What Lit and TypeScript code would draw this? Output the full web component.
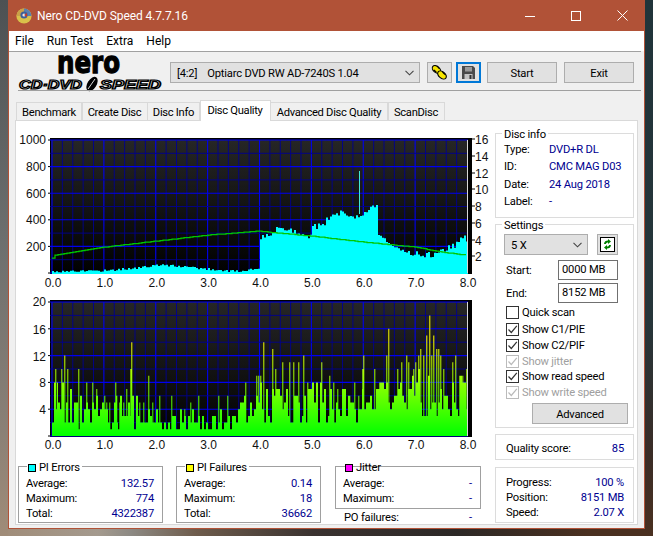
import { LitElement, html, svg, css } from "lit";
import { customElement } from "lit/decorators.js";

function rng(seed: number) {
  return () => {
    seed |= 0; seed = (seed + 0x6d2b79f5) | 0;
    let t = Math.imul(seed ^ (seed >>> 15), 1 | seed);
    t = (t + Math.imul(t ^ (t >>> 7), 61 | t)) ^ t;
    return ((t ^ (t >>> 14)) >>> 0) / 4294967296;
  };
}
const X0 = 52, XU = 51.875;
const px = (g: number) => X0 + g * XU;
function lerp(points: number[][], g: number) {
  for (let i = 1; i < points.length; i++) {
    if (g <= points[i][0]) {
      const [a, b] = points[i - 1], [c, d] = points[i];
      return b + ((d - b) * (g - a)) / (c - a || 1);
    }
  }
  return points[points.length - 1][1];
}
const CYAN = [[0,2.5],[0.5,3],[1,3.5],[1.4,5],[1.8,7],[2,9],[2.4,8],[2.8,6],[3,5],[3.3,3.5],[3.6,2.5],[3.8,4.5],[3.98,5],[3.99,36],[4.2,38],[4.35,47],[4.5,46],[4.75,42],[4.9,37],[4.95,38],[5,47],[5.2,49],[5.35,58],[5.5,61],[5.8,58],[6,61],[6.15,66],[6.27,67],[6.28,40],[6.4,35],[6.47,31],[6.6,27],[6.75,26],[6.82,21],[7,20],[7.3,19],[7.45,22],[7.6,26],[7.75,28],[7.85,34],[7.95,37],[8,32]];
const GREEN = [[0,258],[0.03,255],[1,247],[2,241],[3,235],[3.95,231],[5,236],[6,242],[7,247],[7.5,252],[7.97,255]];
const PEAKS: number[][] = [
  [55,8],[57,8],[55.3,10],[61.3,10],[64.3,12],[67.3,10],[78.3,10],[86.3,8],[92.3,8],[96.3,7],[104.3,6],[106.3,5],[109.3,5],[115.3,8],[116.3,6],[119.3,5],[123.3,5],[126.3,7],[130.3,10],[131.3,14],[132.3,5],[139.3,5],[143.3,5],[148.3,9],[152.3,5],[156.3,4],[159.3,6],[171.3,6],[184.3,4],[190.3,5],[198.3,6],[218.3,6],[227.3,6],[240.3,4],[245.3,8],[256.3,9],[258.3,9],
  [260.3,9],[263.3,14],[272.3,13],[275.3,10],[282.3,11],[289.3,11],[293.3,11],[298.3,11],[303.3,12],[307.3,8],[312.3,8],[321.3,11],[329.3,9],[333.3,8],[337.3,7],[343.3,6],[349.3,6],[354.3,8],[358.3,6],[362.3,10],[363.3,12],[374.3,10],[379.3,8],[386.3,12],[388.3,16],[397.3,10],[401.3,11],[406.3,12],[408.3,11],[413.3,10],[415.3,11],[418.3,12],[420.3,13],[423.3,12],[426.3,15],[429.3,18],[431.3,12],[433.3,15],[436.3,13],[438.3,13],[440.3,12],[443.3,10],[452.3,11],[455.3,12],[459.3,9],[462.3,9],[466.3,10],
];
function cyanPath() {
  const r = rng(17);
  let d = "M52 274";
  for (let x = 52; x < 467; x += 2) {
    const g = (x - X0) / XU;
    const h = lerp(CYAN, g);
    const steady = (g > 6.28 && g < 6.7) ? 0.3 : 1;
    const noise = (r() - 0.5) * (h > 15 ? 6 : 2.5) * steady;
    const top = Math.max(0.5, h + noise);
    d += `V${(274 - top).toFixed(1)}H${x + 2}`;
  }
  return d + "V274Z";
}
function greenPath() {
  let d = "";
  for (let x = 52; x <= 465; x += 3) {
    const y = Math.round(lerp(GREEN, (x - X0) / XU) * 2) / 2;
    d += (d ? `H${x}V${y}` : `M${x} ${y}`);
  }
  return d + "H466";
}
function barsPath() {
  const r = rng(91);
  const U = 6.7;
  let d = "";
  for (let x = 52; x < 467; x += 2) {
    const g = (x - X0) / XU;
    let lo = 1, hi = 3, floor = 1;
    if (g < 0.5) { lo = 2; hi = 8; floor = 1; }
    else if (g < 2) { lo = 1; hi = 6; floor = 1; }
    else if (g < 3.6) { lo = 0.6; hi = 4; floor = 0; }
    else if (g < 4) { lo = 1; hi = 6; floor = 1; }
    else if (g < 6.7) { lo = 2; hi = 8; floor = 2; }
    else { lo = 3; hi = 10; floor = 3; }
    let v = Math.round(lo + r() * (hi - lo));
    if (r() < 0.1) v = Math.max(floor, Math.min(v, 2));
    if (v > 0) d += `M${x} 436V${(436 - v * U).toFixed(1)}H${x + 2}V436Z`;
  }
  for (const [x, v] of PEAKS) d += `M${x} 436V${(436 - v * U).toFixed(1)}H${x + 1}V436Z`;
  return d;
}

interface AxisSpec { top: number; bottom: number; minor: number; }

function grid(a: AxisSpec) {
  const ys: number[] = [];
  const step = (a.bottom - a.top) / a.minor;
  for (let i = 0; i <= a.minor; i++) ys.push(a.top + step * i);
  const xs: number[] = [];
  for (let i = 0; i < 40; i++) xs.push(px(i * 0.2));
  return svg`
    ${xs.map((x, i) => svg`<line class=${i % 5 === 0 ? "major" : "minor"} x1=${x} x2=${x} y1=${a.top} y2=${a.bottom}></line>`)}
    ${ys.map((y, i) => svg`<line class=${i % 2 === 0 ? "major" : "minor"} x1="50" x2="468" y1=${y} y2=${y}></line>`)}
    ${ys.filter((_, i) => i % 2 === 0).map((y) => svg`<line class="tick" x1="48" x2="50" y1=${y} y2=${y}></line>`)}
    <line class="end" x1="467.5" x2="467.5" y1=${a.top} y2=${a.bottom}></line>
  `;
}

const XLABELS = ["0.0", "1.0", "2.0", "3.0", "4.0", "5.0", "6.0", "7.0", "8.0"];

function topChart() {
  const axis: AxisSpec = { top: 140, bottom: 273, minor: 10 };
  const left: [string, number][] = [["1000", 139], ["800", 166], ["600", 193], ["400", 219], ["200", 246]];
  const right: [string, number][] = [["16", 139], ["14", 156], ["12", 173], ["10", 189], ["8", 206], ["6", 223], ["4", 240], ["2", 256]];
  return html`<svg class="chart" viewBox="16 130 477 162" width="477" height="162">
    <defs>
      <linearGradient id="bgTop" x1="0" y1="0" x2="0" y2="1"><stop offset="0" stop-color="#262626"></stop><stop offset="1" stop-color="#000"></stop></linearGradient>
    </defs>
    <rect x="50" y="138" width="422" height="136" fill="#000"></rect>
    <rect x="51" y="140" width="417" height="134" fill="url(#bgTop)"></rect>
    ${grid(axis)}
    <path d=${cyanPath()} fill="#00ffff"></path>
    <line x1="359.5" x2="359.5" y1="171" y2="214" stroke="#40e8d8" stroke-width="1"></line>
    <path d=${greenPath()} fill="none" stroke="#00c800" stroke-width="1.25"></path>
    <line class="end" x1="467.5" x2="467.5" y1="140" y2="273"></line>
    ${right.map(([, y]) => svg`<line class="tick" x1="472" x2="475" y1=${y} y2=${y}></line>`)}
    ${left.map(([t, y]) => svg`<text class="axis" x="46" y=${y + 4.5} text-anchor="end">${t}</text>`)}
    ${right.map(([t, y]) => svg`<text class="axis" x="475" y=${y + 4.5}>${t}</text>`)}
    ${XLABELS.map((t, i) => svg`<text class="axis" x=${px(i) + 1} y="287" text-anchor="middle">${t}</text>`)}
  </svg>`;
}
function bottomChart() {
  const axis: AxisSpec = { top: 302, bottom: 436, minor: 10 };
  const left: [string, number][] = [["20", 301], ["16", 329], ["12", 356], ["8", 382], ["4", 409]];
  return html`<svg class="chart" viewBox="16 292 477 162" width="477" height="162">
    <defs>
      <linearGradient id="bgBot" x1="0" y1="0" x2="0" y2="1"><stop offset="0" stop-color="#262626"></stop><stop offset="1" stop-color="#000"></stop></linearGradient>
      <linearGradient id="barG" gradientUnits="userSpaceOnUse" x1="0" y1="436" x2="0" y2="340">
        <stop offset="0" stop-color="#00ff00"></stop><stop offset="0.5" stop-color="#80ff00"></stop><stop offset="1" stop-color="#ffff00"></stop>
      </linearGradient>
    </defs>
    <rect x="50" y="300" width="422" height="137" fill="#000"></rect>
    <rect x="51" y="302" width="417" height="134" fill="url(#bgBot)"></rect>
    ${grid(axis)}
    <path d=${barsPath()} fill="url(#barG)"></path>
    <line class="end" x1="467.5" x2="467.5" y1="302" y2="436"></line>
    ${left.map(([t, y]) => svg`<text class="axis" x="46" y=${y + 4.5} text-anchor="end">${t}</text>`)}
    ${XLABELS.map((t, i) => svg`<text class="axis" x=${px(i) + 1} y="449" text-anchor="middle">${t}</text>`)}
  </svg>`;
}

const chevron = html`<svg class="chev" width="9" height="6" viewBox="0 0 9 6"><path d="M0.5 0.8 L4.5 4.8 L8.5 0.8" fill="none" stroke="#444" stroke-width="1.1"></path></svg>`;
const tick = html`<svg width="11" height="11" viewBox="0 0 11 11"><path d="M1.5 5.5 L4.3 8.5 L9.8 1.8" fill="none" stroke="currentColor" stroke-width="1.2"></path></svg>`;

const TABS = ["Benchmark", "Create Disc", "Disc Info", "Disc Quality", "Advanced Disc Quality", "ScanDisc"];
const TAB_W = [66, 66, 53, 71, 118, 57];

@customElement("app-root")
export class AppRoot extends LitElement {
  static styles = css`
    :host {
      display: block; width: 653px; height: 536px; overflow: hidden;
      font: 11.2px Roboto, "Liberation Sans", sans-serif; letter-spacing: -0.2px; color: #000;
      background:
        linear-gradient(#4d5153, #6d6f6e 45%, #8a8076 80%, #a08c78) 0 0 / 8px 100% no-repeat,
        linear-gradient(#20343a, #26353a 60%, #3a2c26 85%, #4a3020) 100% 0 / 8px 100% no-repeat,
        linear-gradient(to right, #a08c78, #a49a8e 15%, #8d8a84 20%, #6e5c4c 30%, #3a3230 48%, #2c2826 70%, #4a3020 90%, #4a3020);
    }
    .window { box-sizing: border-box; margin-left: 8px; width: 637px; height: 529px; border: 1px solid #b15237; border-top: 0; background: #f0f0f0; display: flex; flex-direction: column; }
    .title { height: 31px; flex: none; margin: 0 -1px 0 -1px; background: #b15237; color: #fff; display: flex; align-items: center; font-size: 12px; letter-spacing: -0.1px; }
    .title .ico { margin: 0 5px 0 8px; }
    .title .name { flex: 1; }
    .wc { width: 46px; height: 31px; display: flex; align-items: center; justify-content: center; }
    .menu { height: 20px; flex: none; background: #fff; display: flex; align-items: center; gap: 13px; padding-left: 6px; font-size: 12px; letter-spacing: 0; }
    .rule { height: 1px; flex: none; background: #a0a0a0; }
    .rule.top { margin-right: 3px; }
    .rule.bottom { margin: 0 3px 0 9px; }
    .toolbar { height: 38px; flex: none; display: flex; align-items: flex-start; padding: 10px 0 0 9px; box-sizing: border-box; }
    .logo { margin-top: -9px; margin-right: 8px; flex: none; overflow: visible; }
    .logo .nero { font: 700 31px "DejaVu Sans", sans-serif; fill: #000; stroke: #000; stroke-width: 1.3; letter-spacing: 0; }
    .logo .cd { font: 700 italic 12px "Liberation Sans", sans-serif; fill: #f0f0f0; stroke: #000; stroke-width: 1.2; letter-spacing: 0; }
    .combo { box-sizing: border-box; height: 21px; background: #e1e1e1; border: 1px solid #adadad; display: flex; align-items: center; justify-content: space-between; padding: 1px 5px 0 6px; }
    .combo.drive { width: 250px; }
    .combo.speed { width: 84px; height: 21px; }
    .drive-tag { margin-right: 10px; }
    .drive-txt { flex: 1; }
    .btn { box-sizing: border-box; height: 21px; background: #e1e1e1; border: 1px solid #adadad; display: flex; align-items: center; justify-content: center; padding-top: 1px; }
    .btn.icon { width: 25px; margin-left: 7px; padding-top: 0; }
    .btn.save { border: 2px solid #0078d7; margin-left: 4px; }
    .btn.go { width: 70px; margin-left: 6px; }
    .btn.exit { width: 70px; margin-left: 7px; }
    .tabs { height: 29px; flex: none; display: flex; align-items: flex-end; padding-left: 7px; }
    .tab { box-sizing: border-box; height: 18px; background: #f0f0f0; border: 1px solid #d9d9d9; border-bottom: 0; margin-right: -0.5px; display: flex; align-items: center; justify-content: center; letter-spacing: -0.3px; padding-top: 1px; }
    .tab.active { background: #fff; position: relative; z-index: 1; margin-bottom: -1px; height: 21px; padding: 0 0 1px; }
    .pane { box-sizing: border-box; width: 623px; height: 405px; margin-left: 6px; background: #fff; border: 1px solid #d9d9d9; display: flex; gap: 2px; }
    .left { width: 477px; flex: none; padding-top: 9px; }
    .chart { display: block; }
    .chart line.major { stroke: #0000f0; stroke-width: 1.1; }
    .chart line.minor { stroke: #000090; stroke-width: 0.9; }
    .chart line.tick { stroke: #000; stroke-width: 1; }
    .chart line.end { stroke: #d8d8d8; stroke-width: 1; }
    .chart text.axis { font: 12px "Liberation Sans", Arial, sans-serif; fill: #111; letter-spacing: 0; }
    .stats { display: flex; margin-top: 12px; margin-left: 2px; }
    .stat-col { flex: none; }
    .stat { box-sizing: border-box; width: 145px; height: 57px; border: 1px solid #a0a0a0; padding: 0 8px 0 7px; margin-right: 13px; }
    .stat.wide-gap { margin-right: 14px; }
    .stat.jit { width: 146px; height: 43px; margin-right: 0; }
    .s-legend { display: flex; align-items: center; gap: 3px; width: fit-content; height: 15px; margin: -7px 0 1px 1px; padding: 0 2px 0 1px; background: #fff; }
    .s-legend.open { background: none; }
    .sw { box-sizing: border-box; width: 8px; height: 8px; border: 1px solid #000; flex: none; }
    .sw.cy { background: #00ffff; }
    .sw.ye { background: #ffff00; }
    .sw.ma { background: #ff00ff; }
    .row { display: flex; justify-content: space-between; height: 15px; line-height: 15px; }
    .val { color: #000090; }
    .po { width: 146px; box-sizing: border-box; padding: 1px 9px 0 9px; }
    .right { width: 139px; flex: none; padding-top: 12px; }
    .group { box-sizing: border-box; border: 1px solid #dcdcdc; padding: 0 8px; margin-bottom: 6px; }
    .g-legend { width: fit-content; height: 14px; line-height: 14px; margin: -6px 0 -1px -2px; padding: 0 2px; background: #fff; }
    .disc { height: 85px; }
    .disc .d-row { display: grid; grid-template-columns: 45px 1fr; height: 17.4px; line-height: 17.4px; white-space: nowrap; }
    .settings { height: 204px; }
    .s-top { display: flex; align-items: flex-start; margin-top: 2px; }
    .refresh { box-sizing: border-box; width: 21px; height: 21px; margin-left: 9px; background: #e1e1e1; border: 1px solid #adadad; display: flex; align-items: center; justify-content: center; }
    .field { display: flex; align-items: center; justify-content: space-between; height: 20px; padding-left: 2px; margin-right: 7px; margin-top: 3px; }
    .field.first { margin-top: 5px; }
    .field .in { box-sizing: border-box; width: 60px; height: 20px; border: 1px solid #707070; padding-left: 3px; line-height: 18px; }
    .check { display: flex; align-items: center; gap: 3px; height: 15.6px; padding-left: 2px; }
    .check.quick { height: 16px; margin-bottom: 2.2px; }
    .check.dis { color: #a0a0a0; }
    .box { box-sizing: border-box; width: 13px; height: 13px; border: 1px solid #333; display: flex; align-items: center; justify-content: center; flex: none; color: #333; }
    .check.dis .box { border-color: #bbb; color: #bbb; }
    .checks { margin-top: 1px; }
    .adv { width: 96px; margin: 3px 0 0 28px; }
    .quality { height: 26px; padding: 2px 9px 0 10px; display: flex; align-items: center; justify-content: space-between; margin-bottom: 7px; }
    .progress { height: 56px; padding: 6.5px 9px 0 10px; margin-bottom: 0; }
  `;

  render() {
    return html`<div class="window">
      <div class="title">
        <svg class="ico" width="16" height="16" viewBox="0 0 16 16">
          <circle cx="8" cy="8" r="7.6" fill="#d9c14a"></circle>
          <path d="M8 0.5 A7.5 7.5 0 0 1 15.5 8 L8 8Z" fill="#5a7fb0"></path>
          <path d="M0.5 8 A7.5 7.5 0 0 1 8 0.5 L8 8Z" fill="#c9a04a"></path>
          <circle cx="8" cy="7" r="3.6" fill="#3d5f9a"></circle>
          <circle cx="8" cy="7" r="1.6" fill="#e8e8e8"></circle>
          <path d="M8 7 L11 5 L11 9Z" fill="#c23a2a"></path>
        </svg>
        <span class="name">Nero CD-DVD Speed 4.7.7.16</span>
        <div class="wc"><svg width="10" height="10" viewBox="0 0 10 10"><path d="M0 5.5H10" stroke="#fff" stroke-width="1"></path></svg></div>
        <div class="wc"><svg width="10" height="10" viewBox="0 0 10 10"><rect x="0.5" y="0.5" width="9" height="9" fill="none" stroke="#fff" stroke-width="1"></rect></svg></div>
        <div class="wc"><svg width="11" height="11" viewBox="0 0 11 11"><path d="M0.5 0.5L10.5 10.5M10.5 0.5L0.5 10.5" stroke="#fff" stroke-width="1"></path></svg></div>
      </div>
      <div class="menu"><span>File</span><span>Run Test</span><span>Extra</span><span>Help</span></div>
      <div class="rule top"></div>
      <div class="toolbar">
        <svg class="logo" width="144" height="37" viewBox="18 53 144 37">
          <text class="nero" x="57" y="73" textLength="63" lengthAdjust="spacingAndGlyphs">nero</text>
          <text class="cd" x="19" y="88.5" textLength="63" lengthAdjust="spacingAndGlyphs">CD·DVD</text>
          <ellipse cx="92" cy="84" rx="4.5" ry="8" transform="rotate(32 92 84)" fill="#000"></ellipse>
          <path d="M88 89 L95 79" stroke="#f0f0f0" stroke-width="0.9"></path>
          <text class="cd" x="100" y="88.5" textLength="61" lengthAdjust="spacingAndGlyphs">SPEED</text>
        </svg>
        <div class="combo drive"><span class="drive-tag">[4:2]</span><span class="drive-txt">Optiarc DVD RW AD-7240S 1.04</span>${chevron}</div>
        <div class="btn icon">
          <svg width="17" height="17" viewBox="0 0 17 17">
            <g stroke="#000" stroke-width="1.1" fill="#f6e500">
              <ellipse cx="5.5" cy="5.5" rx="4.8" ry="3.1" transform="rotate(40 5.5 5.5)"></ellipse>
              <ellipse cx="11" cy="11" rx="5" ry="3.2" transform="rotate(40 11 11)"></ellipse>
              <path d="M6 2 L8.5 4.8 M3 6 L5.5 8.5 M11.5 8 L14 10.5" fill="none"></path>
            </g>
          </svg>
        </div>
        <div class="btn icon save">
          <svg width="13" height="13" viewBox="0 0 13 13">
            <path d="M0 0H11L13 2V13H0Z" fill="#4a4a4a"></path>
            <rect x="3" y="1" width="7" height="4.5" fill="#9a9a9a"></rect>
            <rect x="2.5" y="8" width="8" height="5" fill="#c4c4c4"></rect>
            <rect x="7.5" y="9" width="2" height="4" fill="#333"></rect>
          </svg>
        </div>
        <div class="btn go">Start</div>
        <div class="btn exit">Exit</div>
      </div>
      <div class="rule bottom"></div>
      <div class="tabs">
        ${TABS.map((t, i) => html`<div class="tab ${i === 3 ? "active" : ""}" style="width:${TAB_W[i]}px">${t}</div>`)}
      </div>
      <div class="pane">
        <div class="left">
          ${topChart()}
          ${bottomChart()}
          <div class="stats">
            <div class="stat">
              <div class="s-legend"><span class="sw cy"></span>PI Errors</div>
              <div class="row"><span>Average:</span><span class="val">132.57</span></div>
              <div class="row"><span>Maximum:</span><span class="val">774</span></div>
              <div class="row"><span>Total:</span><span class="val">4322387</span></div>
            </div>
            <div class="stat wide-gap">
              <div class="s-legend"><span class="sw ye"></span>PI Failures</div>
              <div class="row"><span>Average:</span><span class="val">0.14</span></div>
              <div class="row"><span>Maximum:</span><span class="val">18</span></div>
              <div class="row"><span>Total:</span><span class="val">36662</span></div>
            </div>
            <div class="stat-col">
              <div class="stat jit">
                <div class="s-legend open"><span class="sw ma"></span>Jitter</div>
                <div class="row"><span>Average:</span><span class="val">-</span></div>
                <div class="row"><span>Maximum:</span><span class="val">-</span></div>
              </div>
              <div class="row po"><span>PO failures:</span><span class="val">-</span></div>
            </div>
          </div>
        </div>
        <div class="right">
          <div class="group disc">
            <div class="g-legend">Disc info</div>
            <div class="rows">
              <div class="d-row"><span>Type:</span><span class="val">DVD+R DL</span></div>
              <div class="d-row"><span>ID:</span><span class="val">CMC MAG D03</span></div>
              <div class="d-row"><span>Date:</span><span class="val">24 Aug 2018</span></div>
              <div class="d-row"><span>Label:</span><span class="val">-</span></div>
            </div>
          </div>
          <div class="group settings">
            <div class="g-legend">Settings</div>
            <div class="s-top">
              <div class="combo speed"><span>5 X</span>${chevron}</div>
              <div class="refresh">
                <svg width="15" height="15" viewBox="0 0 15 15">
                  <rect x="0.5" y="0.5" width="14" height="14" fill="#fff" stroke="#000"></rect>
                  <path d="M4 7 C4 4.5 6 3.5 8 3.5 V2 L11 4.5 L8 7 V5.5 C7 5.5 6 6 6 7Z" fill="#008000"></path>
                  <path d="M11 8 C11 10.5 9 11.5 7 11.5 V13 L4 10.5 L7 8 V9.5 C8 9.5 9 9 9 8Z" fill="#008000"></path>
                </svg>
              </div>
            </div>
            <div class="field first"><span>Start:</span><span class="in">0000 MB</span></div>
            <div class="field"><span>End:</span><span class="in">8152 MB</span></div>
            <div class="checks">
              <label class="check quick"><span class="box"></span>Quick scan</label>
              <label class="check"><span class="box">${tick}</span>Show C1/PIE</label>
              <label class="check"><span class="box">${tick}</span>Show C2/PIF</label>
              <label class="check dis"><span class="box">${tick}</span>Show jitter</label>
              <label class="check"><span class="box">${tick}</span>Show read speed</label>
              <label class="check dis"><span class="box">${tick}</span>Show write speed</label>
            </div>
            <div class="btn adv">Advanced</div>
          </div>
          <div class="group quality"><span>Quality score:</span><span class="val">85</span></div>
          <div class="group progress">
            <div class="row"><span>Progress:</span><span class="val">100 %</span></div>
            <div class="row"><span>Position:</span><span class="val">8151 MB</span></div>
            <div class="row"><span>Speed:</span><span class="val">2.07 X</span></div>
          </div>
        </div>
      </div>
    </div>`;
  }
}
